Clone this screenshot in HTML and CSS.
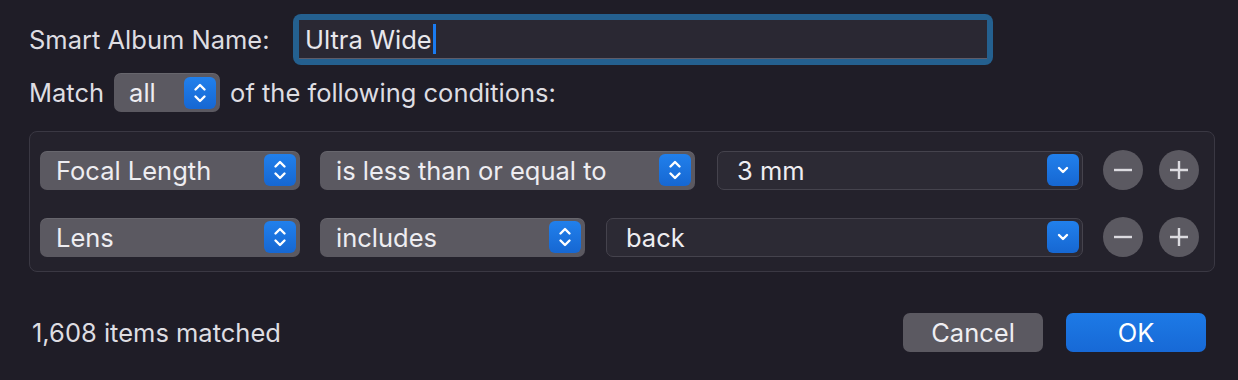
FILE: index.html
```html
<!DOCTYPE html>
<html lang="en">
<head>
    <meta charset="UTF-8">
    <title>Smart Album</title>
    <link rel="stylesheet" href="styles.css">
</head>
<body>
    <div class="dialog">
        <div class="name-row">
            <span class="label">Smart Album Name:</span>
            <div class="name-ring">
                <div class="name-field">Ultra Wide<span class="caret"></span></div>
            </div>
        </div>

        <div class="match-row">
            <span class="label">Match</span>
            <div class="popup popup-all">
                <span>all</span>
                <span class="stepper">
                    <svg width="14" height="22" viewBox="0 0 14 22"><path d="M2.5 7.5 L7 3 L11.5 7.5 M2.5 14.5 L7 19 L11.5 14.5" fill="none" stroke="#fff" stroke-width="2.4" stroke-linecap="round" stroke-linejoin="round"/></svg>
                </span>
            </div>
            <span class="label">of the following conditions:</span>
        </div>

        <div class="conditions">
            <div class="rule">
                <div class="popup field-popup">
                    <span>Focal Length</span>
                    <span class="stepper">
                        <svg width="14" height="22" viewBox="0 0 14 22"><path d="M2.5 7.5 L7 3 L11.5 7.5 M2.5 14.5 L7 19 L11.5 14.5" fill="none" stroke="#fff" stroke-width="2.4" stroke-linecap="round" stroke-linejoin="round"/></svg>
                    </span>
                </div>
                <div class="popup op-long">
                    <span>is less than or equal to</span>
                    <span class="stepper">
                        <svg width="14" height="22" viewBox="0 0 14 22"><path d="M2.5 7.5 L7 3 L11.5 7.5 M2.5 14.5 L7 19 L11.5 14.5" fill="none" stroke="#fff" stroke-width="2.4" stroke-linecap="round" stroke-linejoin="round"/></svg>
                    </span>
                </div>
                <div class="combo">
                    <span>3 mm</span>
                    <span class="chevron">
                        <svg width="14" height="10" viewBox="0 0 14 10"><path d="M3 3 L7 7 L11 3" fill="none" stroke="#fff" stroke-width="2.4" stroke-linecap="round" stroke-linejoin="round"/></svg>
                    </span>
                </div>
                <button class="round-btn">
                    <svg width="20" height="20" viewBox="0 0 20 20"><path d="M1 10 H19" stroke="#dcdbe0" stroke-width="2.4"/></svg>
                </button>
                <button class="round-btn">
                    <svg width="20" height="20" viewBox="0 0 20 20"><path d="M1 10 H19 M10 1 V19" stroke="#dcdbe0" stroke-width="2.4"/></svg>
                </button>
            </div>
            <div class="rule">
                <div class="popup field-popup">
                    <span>Lens</span>
                    <span class="stepper">
                        <svg width="14" height="22" viewBox="0 0 14 22"><path d="M2.5 7.5 L7 3 L11.5 7.5 M2.5 14.5 L7 19 L11.5 14.5" fill="none" stroke="#fff" stroke-width="2.4" stroke-linecap="round" stroke-linejoin="round"/></svg>
                    </span>
                </div>
                <div class="popup op-short">
                    <span>includes</span>
                    <span class="stepper">
                        <svg width="14" height="22" viewBox="0 0 14 22"><path d="M2.5 7.5 L7 3 L11.5 7.5 M2.5 14.5 L7 19 L11.5 14.5" fill="none" stroke="#fff" stroke-width="2.4" stroke-linecap="round" stroke-linejoin="round"/></svg>
                    </span>
                </div>
                <div class="combo">
                    <span>back</span>
                    <span class="chevron">
                        <svg width="14" height="10" viewBox="0 0 14 10"><path d="M3 3 L7 7 L11 3" fill="none" stroke="#fff" stroke-width="2.4" stroke-linecap="round" stroke-linejoin="round"/></svg>
                    </span>
                </div>
                <button class="round-btn">
                    <svg width="20" height="20" viewBox="0 0 20 20"><path d="M1 10 H19" stroke="#dcdbe0" stroke-width="2.4"/></svg>
                </button>
                <button class="round-btn">
                    <svg width="20" height="20" viewBox="0 0 20 20"><path d="M1 10 H19 M10 1 V19" stroke="#dcdbe0" stroke-width="2.4"/></svg>
                </button>
            </div>
        </div>

        <div class="footer">
            <span class="count">1,608 items matched</span>
            <div class="actions">
                <button class="push-btn cancel-btn">Cancel</button>
                <button class="push-btn ok-btn">OK</button>
            </div>
        </div>
    </div>
</body>
</html>
```

FILE: styles.css
```css
:root {
    --bg: #1f1d27;
    --popup: #5b5961;
    --blue: #1b74e2;
    --text: #e4e3e8;
}
body {
    margin: 0;
    background-color: var(--bg);
    font-family: Inter, "Noto Sans", sans-serif;
    font-size: 25.5px;
    color: var(--text);
}
.dialog {
    padding: 14px 32px 0 29px;
}
.label {
    color: #dedde2;
}
.name-row {
    display: flex;
    align-items: center;
}
.name-row .label {
    width: 264px;
}
.name-ring {
    width: 688px;
    padding: 6px;
    background-color: #24608f;
    border-radius: 8px;
}
.name-field {
    height: 38px;
    background-color: #2a2833;
    border-bottom: 1px solid #5e5c69;
    display: flex;
    align-items: center;
    padding-left: 6px;
    color: #e8e7ec;
}
.caret {
    display: inline-block;
    width: 3px;
    height: 30px;
    background-color: #1a7bf0;
    margin-left: 1px;
}
.match-row {
    display: flex;
    align-items: center;
    margin-top: 8px;
    gap: 10px;
}
.popup {
    height: 39px;
    box-sizing: border-box;
    background-color: var(--popup);
    border-radius: 7px;
    box-shadow: inset 0 1px 0 rgba(255,255,255,0.08);
    display: flex;
    align-items: center;
    justify-content: space-between;
    padding: 0 4px 0 16px;
    color: #eeedf1;
}
.popup-all {
    width: 106px;
    padding-left: 15px;
}
.stepper {
    width: 32px;
    height: 32px;
    border-radius: 6px;
    background: linear-gradient(#2180ec, #1667d2);
    display: flex;
    align-items: center;
    justify-content: center;
}
.conditions {
    margin-top: 19px;
    width: 1186px;
    box-sizing: border-box;
    height: 141px;
    border: 1px solid #3a3843;
    border-radius: 8px;
    background-color: #24222c;
    padding: 18px 15px 0 10px;
    display: flex;
    flex-direction: column;
    gap: 27px;
}
.rule {
    display: flex;
    align-items: center;
}
.field-popup {
    width: 260px;
    margin-right: 20px;
}
.op-long {
    width: 375px;
    margin-right: 22px;
}
.op-short {
    width: 265px;
    margin-right: 21px;
}
.combo {
    flex: 1;
    height: 39px;
    box-sizing: border-box;
    border: 1px solid #45434d;
    border-radius: 7px;
    background-color: #2c2a34;
    display: flex;
    align-items: center;
    justify-content: space-between;
    padding: 0 3px 0 19px;
    margin-right: 20px;
    color: #eeedf1;
}
.chevron {
    width: 32px;
    height: 32px;
    border-radius: 6px;
    background: linear-gradient(#2180ec, #1667d2);
    display: flex;
    align-items: center;
    justify-content: center;
}
.round-btn {
    width: 40px;
    height: 40px;
    border-radius: 50%;
    border: none;
    padding: 0;
    background-color: var(--popup);
    display: flex;
    align-items: center;
    justify-content: center;
}
.round-btn + .round-btn {
    margin-left: 16px;
}
.footer {
    display: flex;
    justify-content: space-between;
    align-items: center;
    margin-top: 41px;
    padding-left: 3px;
}
.count {
    color: #dedde2;
}
.actions {
    display: flex;
    gap: 23px;
}
.push-btn {
    width: 140px;
    height: 39px;
    border: none;
    border-radius: 7px;
    font-family: inherit;
    font-size: 25.5px;
    color: #efeef2;
}
.cancel-btn {
    background-color: var(--popup);
}
.ok-btn {
    background: linear-gradient(#1d7ae6, #1769d6);
    color: #fff;
}
```
